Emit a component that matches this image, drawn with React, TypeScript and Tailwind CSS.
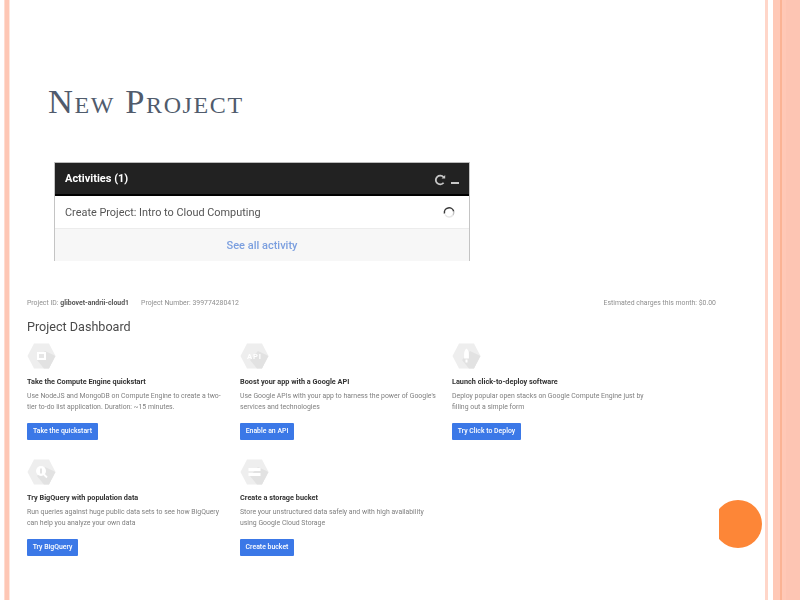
import React from "react";

const Hex = ({ kind }: { kind: "chip" | "api" | "rocket" | "query" | "bucket" }) => (
  <svg width="29" height="26" viewBox="0 0 29 26" className="block">
    <polygon points="7,0.5 22,0.5 28.5,13 22,25.5 7,25.5 0.5,13" fill="#eeeeee" />
    <polygon points="10,17 18,8 28.5,13 22,25.500 17,25.500" fill="#e2e2e2" />
    {kind === "chip" && (
      <g>
        <rect x="10" y="9" width="9" height="8" fill="#fff" />
        <rect x="12" y="11" width="5" height="4" fill="#e6e6e6" />
      </g>
    )}
    {kind === "api" && (
      <text x="14.5" y="16" textAnchor="middle" fontSize="7.5" fontWeight="700" fontFamily="Roboto, sans-serif" letterSpacing="1" fill="#fff">
        API
      </text>
    )}
    {kind === "rocket" && (
      <g fill="#fff">
        <path d="M14.5 5.500c2 1.600 2.400 3.600 2.400 6v4h-4.800v-4c0-2.400.4-4.400 2.400-6z" />
        <rect x="13.500" y="16.500" width="2" height="3" />
      </g>
    )}
    {kind === "query" && (
      <g>
        <circle cx="14" cy="12" r="5" fill="#fff" />
        <rect x="13.200" y="9.500" width="1.600" height="5" fill="#dddddd" />
        <path d="M17 15.500l3 3" stroke="#fff" strokeWidth="1.800" />
      </g>
    )}
    {kind === "bucket" && (
      <g fill="#fff">
        <rect x="8.500" y="9" width="12" height="3" />
        <rect x="8.500" y="14" width="12" height="3" />
      </g>
    )}
  </svg>
);

const Card = ({
  kind,
  title,
  lines,
  cta,
  w,
}: {
  kind: "chip" | "api" | "rocket" | "query" | "bucket";
  title: string;
  lines: string[];
  cta: string;
  w: string;
}) => (
  <div className="flex flex-col items-start h-[116px]">
    <Hex kind={kind} />
    <div className="mt-[8px] h-[10px] leading-[10px] text-[7.3px] font-bold text-[#333333] whitespace-nowrap">{title}</div>
    <div className="mt-[4px] text-[6.9px] leading-[10.5px] text-[#808080] whitespace-nowrap">
      {lines.map((l) => (
        <div key={l}>{l}</div>
      ))}
    </div>
    <div className={`mt-[11px] h-[17px] ${w} flex items-center justify-center bg-[#3b78e7] rounded-[1px] text-[6.9px] font-medium text-white whitespace-nowrap`}>
      {cta}
    </div>
  </div>
);

export default function App() {
  return (
    <div className="relative flex w-[800px] h-[600px] overflow-hidden bg-white font-['Roboto',sans-serif]">
      <div className="flex w-[10px] shrink-0">
        <div className="w-[4px] bg-white" />
        <div className="w-[1px] bg-[#ffdcd0]" />
        <div className="w-[4px] bg-[#fec7b5]" />
        <div className="w-[1px] bg-[#ffe6dd]" />
      </div>

      <main className="w-[755px] shrink-0 flex flex-col">
        <h1 className="mt-[79px] ml-[38px] h-[44px] leading-[44px] text-[34.5px] tracking-[1.6px] text-[#505b6c] whitespace-nowrap [font-variant:small-caps] font-['Liberation_Serif',serif]">
          New Project
        </h1>

        <section className="mt-[39px] ml-[44px] w-[416px] h-[99px] border-x border-[#c4c4c4] flex flex-col [filter:blur(0.7px)]">
          <div className="h-[34px] pt-[2px] bg-[#222222] border-t border-[#bbbbbb] border-b-2 border-b-black flex items-center justify-between pl-[10px] pr-[10px]">
            <span className="text-[11px] font-bold text-white">Activities (1)</span>
            <span className="flex items-center gap-[5px]">
              <svg width="12" height="12" viewBox="0 0 12 12">
                <path d="M9.600 3.200A4.400 4.400 0 1 0 9.600 8.800" fill="none" stroke="#c8c8c8" strokeWidth="1.800" />
                <path d="M7.600 4.600h3.600V1z" fill="#c8c8c8" />
              </svg>
              <span className="mt-[7px] w-[8px] h-[2px] bg-[#c8c8c8]" />
            </span>
          </div>
          <div className="h-[33px] pt-[2px] bg-white border-b border-[#ececec] flex items-center justify-between pl-[10px] pr-[14px]">
            <span className="text-[10.9px] text-[#555555]">Create Project: Intro to Cloud Computing</span>
            <svg width="12" height="12" viewBox="0 0 12 12" className="-mt-[2px]">
              <path d="M1.500 7.500A4.700 4.700 0 0 1 10.700 5.500" fill="none" stroke="#3a3a3a" strokeWidth="1.500" />
              <path d="M10.700 5.500A4.700 4.700 0 0 1 10 9" fill="none" stroke="#c4c4c4" strokeWidth="1.500" />
              <path d="M10 9A4.700 4.700 0 0 1 2 8.500" fill="none" stroke="#e6e6e6" strokeWidth="1.500" />
            </svg>
          </div>
          <div className="flex-1 pt-[3px] bg-[#f7f7f7] flex items-center justify-center text-[11px] font-medium text-[#7b9fdf]">
            See all activity
          </div>
        </section>

        <section className="mt-[36px] ml-[17px] w-[689px] flex flex-col [filter:blur(0.7px)]">
          <div className="flex justify-between h-[12px] leading-[12px] text-[6.9px] text-[#8f8f8f] whitespace-nowrap">
            <div className="flex gap-[12px]">
              <span>
                Project ID: <b className="text-[#555555]">glibovet-andrii-cloud1</b>
              </span>
              <span>Project Number: 399774280412</span>
            </div>
            <span>Estimated charges this month: $0.00</span>
          </div>
          <h2 className="mt-[9px] h-[18px] leading-[18px] text-[12.6px] text-[#4a4a4a]">Project Dashboard</h2>
          <div className="mt-[7px] grid grid-cols-[213px_212px_1fr]">
            <Card
              kind="chip"
              title="Take the Compute Engine quickstart"
              lines={["Use NodeJS and MongoDB on Compute Engine to create a two-", "tier to-do list application. Duration: ~15 minutes."]}
              cta="Take the quickstart"
              w="w-[71px]"
            />
            <Card
              kind="api"
              title="Boost your app with a Google API"
              lines={["Use Google APIs with your app to harness the power of Google's", "services and technologies"]}
              cta="Enable an API"
              w="w-[54px]"
            />
            <Card
              kind="rocket"
              title="Launch click-to-deploy software"
              lines={["Deploy popular open stacks on Google Compute Engine just by", "filling out a simple form"]}
              cta="Try Click to Deploy"
              w="w-[69px]"
            />
            <Card
              kind="query"
              title="Try BigQuery with population data"
              lines={["Run queries against huge public data sets to see how BigQuery", "can help you analyze your own data"]}
              cta="Try BigQuery"
              w="w-[51px]"
            />
            <Card
              kind="bucket"
              title="Create a storage bucket"
              lines={["Store your unstructured data safely and with high availability", "using Google Cloud Storage"]}
              cta="Create bucket"
              w="w-[54px]"
            />
          </div>
        </section>
      </main>

      <div className="flex flex-1">
        <div className="w-[3px] bg-[#ffd6c9]" />
        <div className="w-[5px] bg-white" />
        <div className="w-[7px] bg-[#ffc8b6]" />
        <div className="w-[2px] bg-[#fbb394]" />
        <div className="w-[4px] bg-[#ffc8b6]" />
        <div className="flex-1 bg-[#fdc5b3]" />
      </div>

      <div className="absolute left-[719px] top-[500px] w-[43px] h-[48px] overflow-hidden">
        <div className="absolute right-0 top-0 w-[48px] h-[48px] rounded-full bg-[#fd8637]" />
      </div>
    </div>
  );
}
